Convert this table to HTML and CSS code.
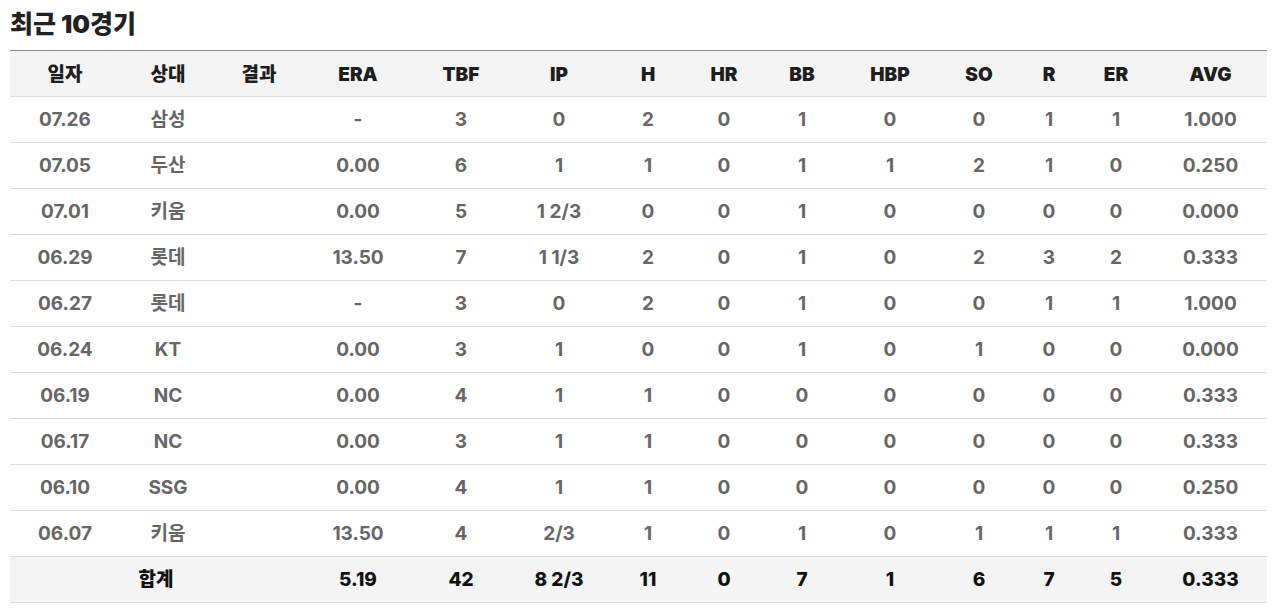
FILE: index.html
```html
<!DOCTYPE html>
<html lang="ko">
<head>
<meta charset="utf-8">
<link rel="stylesheet" href="styles.css">
</head>
<body>
<div class="wrap">
  <h2 class="title">최근 10경기</h2>
  <table class="stats">
    <colgroup>
      <col class="c-date"><col class="c-opp"><col class="c-res"><col class="c-era">
      <col class="c-tbf"><col class="c-ip"><col class="c-h"><col class="c-hr">
      <col class="c-bb"><col class="c-hbp"><col class="c-so"><col class="c-r">
      <col class="c-er"><col class="c-avg">
    </colgroup>
    <thead>
      <tr><th>일자</th><th>상대</th><th>결과</th><th>ERA</th><th>TBF</th><th>IP</th><th>H</th><th>HR</th><th>BB</th><th>HBP</th><th>SO</th><th>R</th><th>ER</th><th>AVG</th></tr>
    </thead>
    <tbody>
      <tr><td>07.26</td><td>삼성</td><td></td><td>-</td><td>3</td><td>0</td><td>2</td><td>0</td><td>1</td><td>0</td><td>0</td><td>1</td><td>1</td><td>1.000</td></tr>
      <tr><td>07.05</td><td>두산</td><td></td><td>0.00</td><td>6</td><td>1</td><td>1</td><td>0</td><td>1</td><td>1</td><td>2</td><td>1</td><td>0</td><td>0.250</td></tr>
      <tr><td>07.01</td><td>키움</td><td></td><td>0.00</td><td>5</td><td>1 2/3</td><td>0</td><td>0</td><td>1</td><td>0</td><td>0</td><td>0</td><td>0</td><td>0.000</td></tr>
      <tr><td>06.29</td><td>롯데</td><td></td><td>13.50</td><td>7</td><td>1 1/3</td><td>2</td><td>0</td><td>1</td><td>0</td><td>2</td><td>3</td><td>2</td><td>0.333</td></tr>
      <tr><td>06.27</td><td>롯데</td><td></td><td>-</td><td>3</td><td>0</td><td>2</td><td>0</td><td>1</td><td>0</td><td>0</td><td>1</td><td>1</td><td>1.000</td></tr>
      <tr><td>06.24</td><td>KT</td><td></td><td>0.00</td><td>3</td><td>1</td><td>0</td><td>0</td><td>1</td><td>0</td><td>1</td><td>0</td><td>0</td><td>0.000</td></tr>
      <tr><td>06.19</td><td>NC</td><td></td><td>0.00</td><td>4</td><td>1</td><td>1</td><td>0</td><td>0</td><td>0</td><td>0</td><td>0</td><td>0</td><td>0.333</td></tr>
      <tr><td>06.17</td><td>NC</td><td></td><td>0.00</td><td>3</td><td>1</td><td>1</td><td>0</td><td>0</td><td>0</td><td>0</td><td>0</td><td>0</td><td>0.333</td></tr>
      <tr><td>06.10</td><td>SSG</td><td></td><td>0.00</td><td>4</td><td>1</td><td>1</td><td>0</td><td>0</td><td>0</td><td>0</td><td>0</td><td>0</td><td>0.250</td></tr>
      <tr><td>06.07</td><td>키움</td><td></td><td>13.50</td><td>4</td><td>2/3</td><td>1</td><td>0</td><td>1</td><td>0</td><td>1</td><td>1</td><td>1</td><td>0.333</td></tr>
    </tbody>
    <tfoot>
      <tr><td colspan="3">합계</td><td>5.19</td><td>42</td><td>8 2/3</td><td>11</td><td>0</td><td>7</td><td>1</td><td>6</td><td>7</td><td>5</td><td>0.333</td></tr>
    </tfoot>
  </table>
</div>
</body>
</html>
```

FILE: styles.css
```css
html, body {
  margin: 0;
  padding: 0;
  background: #fff;
}
body {
  font-family: Inter, "Noto Sans CJK KR", sans-serif;
}
.wrap {
  padding: 8px 7px 0 10px;
}
.title {
  margin: 0 0 10px 0;
  font-family: Inter, "Noto Sans CJK KR", sans-serif;
  font-size: 25px;
  font-weight: 900;
  line-height: 32px;
  color: #222;
}
.stats {
  width: 1257px;
  border-collapse: collapse;
  table-layout: fixed;
  font-weight: 700;
  font-size: 19px;
}
.c-date { width: 110px; }
.c-opp { width: 96px; }
.c-res { width: 86px; }
.c-era { width: 112px; }
.c-tbf { width: 94px; }
.c-ip { width: 102px; }
.c-h { width: 76px; }
.c-hr { width: 76px; }
.c-bb { width: 80px; }
.c-hbp { width: 96px; }
.c-so { width: 82px; }
.c-r { width: 58px; }
.c-er { width: 76px; }
.c-avg { width: 113px; }
.stats th, .stats td {
  height: 45px;
  padding: 0;
  text-align: center;
  vertical-align: middle;
  border-bottom: 1px solid #ddd;
  white-space: nowrap;
  line-height: 22px;
}
.stats thead th {
  height: 43px;
  padding-top: 2px;
  background: #f4f4f4;
  color: #1e1e1e;
  border-top: 1px solid #8a8a8a;
  font-weight: 900;
}
.stats tbody td {
  color: #666;
}
.stats tfoot td {
  background: #f4f4f4;
  color: #111;
  font-weight: 800;
}
```
